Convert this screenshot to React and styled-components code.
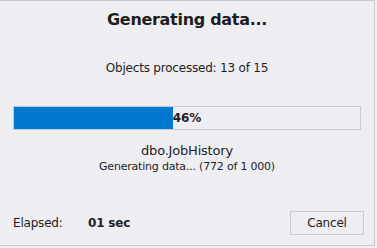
import React from "react";
import styled, { createGlobalStyle } from "styled-components";

const GlobalStyle = createGlobalStyle`
  html, body {
    margin: 0;
    padding: 0;
    background: #c3c9db;
  }
  body {
    font-family: "DejaVu Sans", sans-serif;
    color: #1e1e1e;
  }
`;

const Frame = styled.div`
  width: 377px;
  height: 248px;
  background: #f0f0f4;
`;

const Dialog = styled.div`
  box-sizing: border-box;
  width: 375px;
  height: 246px;
  background: #eeedf2;
  border-top: 1px solid #c6c9d6;
  border-right: 1px solid #c6c9d6;
  border-bottom: 1px solid #c6c9d6;
  padding: 0 13px;
  display: flex;
  flex-direction: column;
`;

const Title = styled.div`
  margin-top: 8px;
  text-align: center;
  font-weight: bold;
  font-size: 16px;
  line-height: 22px;
  letter-spacing: -0.3px;
`;

const Line = styled.div`
  text-align: center;
  font-size: ${(p) => p.$size || 12}px;
  line-height: ${(p) => p.$lh || 16}px;
  margin-top: ${(p) => p.$top || 0}px;
  letter-spacing: -0.2px;
`;

const Bar = styled.div`
  position: relative;
  box-sizing: border-box;
  margin-top: 30px;
  width: 348px;
  height: 24px;
  border: 1px solid #c8c8d6;
  background: #eeedf2;
`;

const Fill = styled.div`
  height: 100%;
  background: #0078d0;
`;

const Percent = styled.span`
  position: absolute;
  inset: 0;
  display: flex;
  align-items: center;
  justify-content: center;
  font-weight: bold;
  font-size: 12px;
  color: #1e1e1e;
`;

const Footer = styled.div`
  margin-top: auto;
  margin-bottom: 10px;
  margin-right: -3px;
  display: flex;
  align-items: center;
`;

const Label = styled.span`
  font-size: 12px;
  width: 75px;
  letter-spacing: -0.2px;
`;

const Value = styled.span`
  font-size: 12px;
  font-weight: bold;
  letter-spacing: -0.2px;
`;

const Button = styled.button`
  margin-left: auto;
  box-sizing: border-box;
  width: 74px;
  height: 24px;
  padding: 0;
  border: 1px solid #c9c9d6;
  background: #eeedf2;
  font-family: "DejaVu Sans", sans-serif;
  font-size: 12px;
  color: #1e1e1e;
  letter-spacing: -0.2px;
`;

export default function App() {
  const processed = 13;
  const objects = 15;
  const progress = 46;
  return (
    <>
      <GlobalStyle />
      <Frame>
        <Dialog>
          <Title>Generating data...</Title>
          <Line $top={29}>
            Objects processed: {processed} of {objects}
          </Line>
          <Bar>
            <Fill style={{ width: `${progress}%` }} />
            <Percent>{progress}%</Percent>
          </Bar>
          <Line $top={12} $size={13} $lh={17}>
            dbo.JobHistory
          </Line>
          <Line $size={11} $lh={15}>
            Generating data... (772 of 1 000)
          </Line>
          <Footer>
            <Label>Elapsed:</Label>
            <Value>01 sec</Value>
            <Button>Cancel</Button>
          </Footer>
        </Dialog>
      </Frame>
    </>
  );
}
